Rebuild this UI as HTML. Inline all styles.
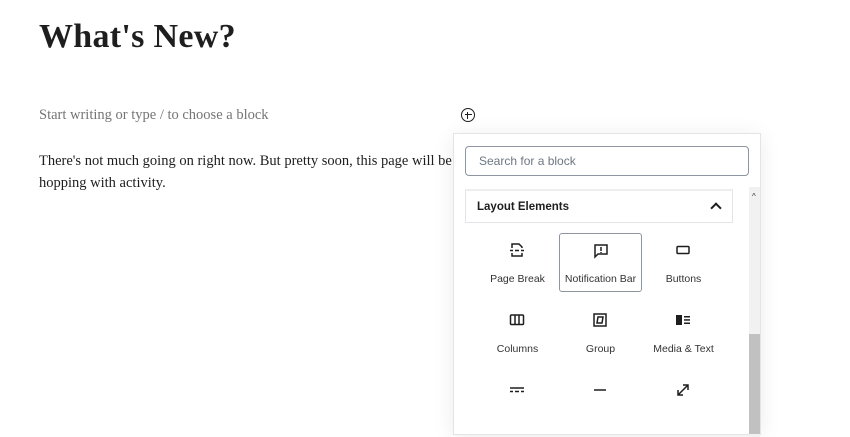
<!DOCTYPE html>
<html><head><style>
body{margin:0;width:850px;height:400px;background:#fff;overflow:hidden;position:relative;font-family:"Liberation Serif",serif;color:#1e1e1e}
h1{position:absolute;left:39px;top:18px;margin:0;font-size:34px;font-weight:bold;letter-spacing:0.3px}
.ph{position:absolute;left:39px;top:107px;font-size:14.5px;color:#757575}
.p{position:absolute;left:39px;top:150px;font-size:14.5px;line-height:22px;width:425px}
.plus{position:absolute;left:461px;top:108px;width:12px;height:12px;border:1.5px solid #1e1e1e;border-radius:50%}
.plus:before{content:"";position:absolute;left:5.2px;top:2.5px;width:1.3px;height:7px;background:#1e1e1e}
.plus:after{content:"";position:absolute;left:2.5px;top:5.2px;width:7px;height:1.3px;background:#1e1e1e}
.pop{position:absolute;left:453px;top:133px;width:306px;height:300px;border:1px solid #e2e4e7;background:#fff;box-shadow:0 3px 20px rgba(0,0,0,.08);font-family:"Liberation Sans",sans-serif}
.search{position:absolute;left:11px;top:12px;font-size:12px;color:#6c7781;line-height:28px;padding-left:13px;box-sizing:border-box;width:284px;height:30px;border:1px solid #8d96a0;border-radius:4px}
.track{position:absolute;left:295px;top:53px;width:11px;height:250px;background:#f1f1f1}
.thumb{position:absolute;left:295px;top:200px;width:11px;height:100px;background:#c1c1c1}
.arr{position:absolute;left:298px;top:58px;font-size:8px;color:#333}
.hdr{position:absolute;left:11px;top:55px;width:268px;height:34px;border:1px solid #e2e4e7;border-top:2px solid #eee;box-sizing:border-box;font-size:11.5px;font-weight:bold;color:#1e1e1e;line-height:32px;padding-left:11px}
.chev{position:absolute;right:12px;top:13px;width:6px;height:6px;border-left:2px solid #1e1e1e;border-top:2px solid #1e1e1e;transform:rotate(45deg)}
.it{position:absolute;width:83px;height:59px;text-align:center;font-size:10.5px;color:#333}
.it svg{position:absolute;left:33px;top:9px}
.it span{position:absolute;left:0;right:0;top:40px}
.sel{border:1px solid #8d96a0;border-radius:3px;box-sizing:border-box}
</style></head><body>
<h1>What's New?</h1>
<div class="ph">Start writing or type / to choose a block</div>
<div class="p">There's not much going on right now. But pretty soon, this page will be hopping with activity.</div>
<div class="plus"></div>
<div class="pop">
<div class="search">Search for a block</div>
<div class="track"></div><div class="thumb"></div><div class="arr">^</div>
<div class="hdr">Layout Elements<div class="chev"></div></div>
<div class="it" style="left:22px;top:99px"><svg width="16" height="16" viewBox="0 0 16 16" fill="none" stroke="#1e1e1e" stroke-width="1.5"><path d="M3 6V2h7l3 3v1M3 11v3h10v-3M1 8.5h3M6 8.5h4M12 8.5h3"/></svg><span>Page Break</span></div>
<div class="it sel" style="left:105px;top:99px"><svg width="16" height="16" viewBox="0 0 16 16" fill="none" stroke="#1e1e1e" stroke-width="1.5"><path d="M2 2h12v9H5l-3 3z"/><path d="M8 4v4M8 9v1"/></svg><span style="top:39px">Notification Bar</span></div>
<div class="it" style="left:188px;top:99px"><svg width="16" height="16" viewBox="0 0 16 16" fill="none" stroke="#1e1e1e" stroke-width="1.5"><rect x="2" y="4.5" width="12" height="7" rx="1"/></svg><span>Buttons</span></div>
<div class="it" style="left:22px;top:169px"><svg width="16" height="16" viewBox="0 0 16 16" fill="none" stroke="#1e1e1e" stroke-width="1.5"><rect x="1.5" y="3" width="13" height="9.5" rx="1"/><path d="M6 3v9.5M10 3v9.5"/></svg><span>Columns</span></div>
<div class="it" style="left:105px;top:169px"><svg width="16" height="16" viewBox="0 0 16 16" fill="none" stroke="#1e1e1e" stroke-width="1.5"><rect x="2" y="2" width="12" height="12"/><path d="M6 5h5l-1 6H5z"/></svg><span>Group</span></div>
<div class="it" style="left:188px;top:169px"><svg width="16" height="16" viewBox="0 0 16 16" fill="#1e1e1e"><rect x="1" y="3" width="6" height="10"/><rect x="9" y="4" width="6" height="1.5"/><rect x="9" y="7.2" width="6" height="1.5"/><rect x="9" y="10.5" width="6" height="1.5"/></svg><span>Media &amp; Text</span></div>
<div class="it" style="left:22px;top:239px"><svg width="16" height="16" viewBox="0 0 16 16" fill="none" stroke="#1e1e1e" stroke-width="1.5"><path d="M1 6h14M1 9.5h3M6 9.5h4M12 9.5h3"/></svg></div>
<div class="it" style="left:105px;top:239px"><svg width="16" height="16" viewBox="0 0 16 16" fill="none" stroke="#1e1e1e" stroke-width="1.5"><path d="M2 8h12"/></svg></div>
<div class="it" style="left:188px;top:239px"><svg width="16" height="16" viewBox="0 0 16 16" fill="none" stroke="#1e1e1e" stroke-width="1.5"><path d="M3 13L13 3M8 3h5v5M3 8v5h5"/></svg></div>
</div>
</body></html>
